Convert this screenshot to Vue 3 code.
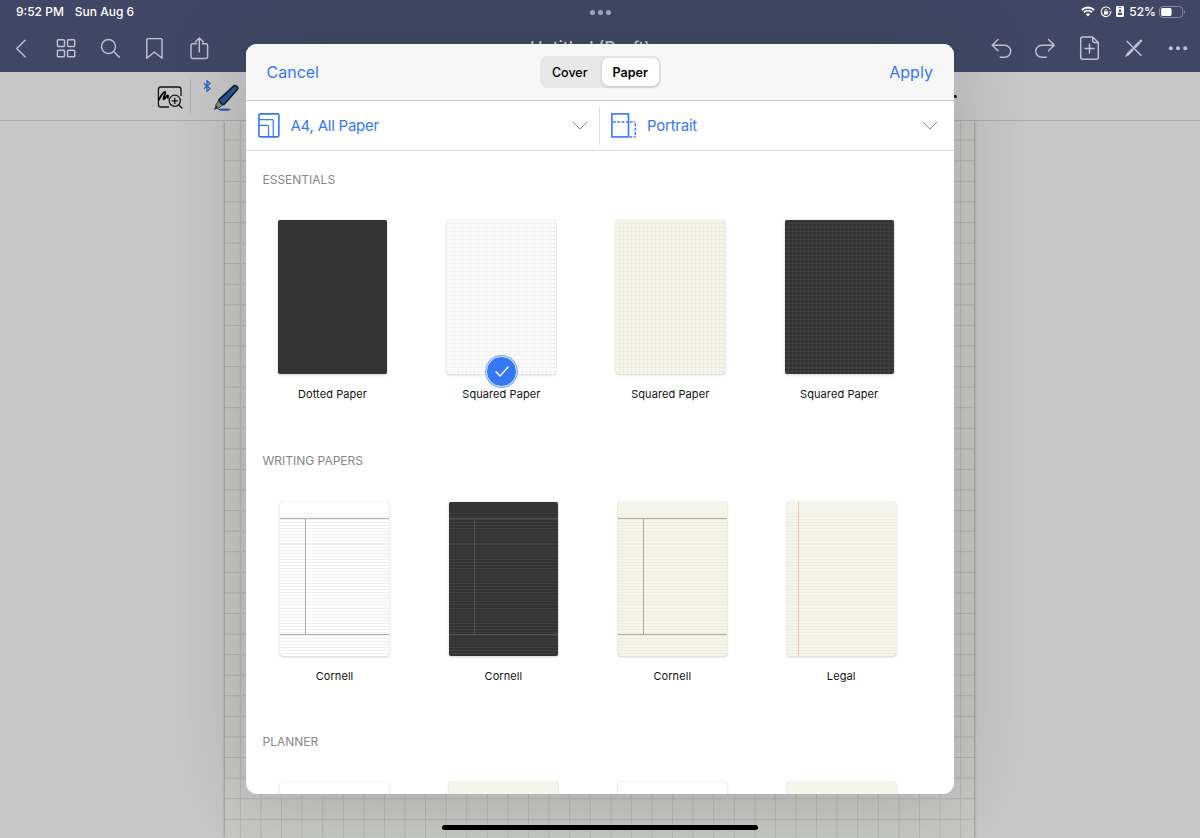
<template>
  <div class="screen">
    <div class="status-bar">
      <div class="status-left">
        <span>9:52 PM</span>
        <span>Sun Aug 6</span>
      </div>
      <div class="multitask"><i></i><i></i><i></i></div>
      <div class="status-right">
        <svg class="wifi" viewBox="0 0 14 11" width="14" height="11">
          <path d="M7 10.6 4.9 8.3a3.1 3.1 0 0 1 4.2 0z" fill="#fff" />
          <path d="M2.9 6.3a5.9 5.9 0 0 1 8.2 0M.9 4a8.8 8.8 0 0 1 12.2 0" fill="none" stroke="#fff" stroke-width="1.9" />
        </svg>
        <svg class="lock" viewBox="0 0 12 12" width="12" height="12">
          <path d="M10.3 3.6A4.8 4.8 0 1 0 10.6 7.2" fill="none" stroke="#fff" stroke-width="1.1" />
          <path d="M8.9 5.6h3l-1.5 2z" fill="#fff" />
          <rect x="3.9" y="5.3" width="4" height="3.1" rx=".5" fill="#fff" />
          <path d="M4.7 5.4V4.6a1.2 1.2 0 0 1 2.4 0v.8" fill="none" stroke="#fff" stroke-width=".7" />
        </svg>
        <svg class="badge" viewBox="0 0 8 11" width="8" height="11">
          <rect width="8" height="11" rx="1.2" fill="#fff" />
          <path d="M2.7 1.3h2.6" stroke="#3e4663" stroke-width=".9" />
          <circle cx="4" cy="4.7" r="1.3" fill="#3e4663" />
          <path d="M1.7 8.9c0-3.2 4.6-3.2 4.6 0z" fill="#3e4663" />
        </svg>
        <span class="percent">52%</span>
        <svg viewBox="0 0 27 12" width="27" height="12">
          <rect x=".5" y=".5" width="23.2" height="11" rx="3.4" fill="none" stroke="#868ca0" />
          <rect x="2" y="2" width="10.6" height="8" rx="1.8" fill="#fff" />
          <path d="M25 4.2c1.4.5 1.4 3.1 0 3.6z" fill="#868ca0" />
        </svg>
      </div>
    </div>

    <div class="nav-bar">
      <div class="nav-group">
        <svg v-for="icon in leftIcons" :key="icon.name" class="nav-icon" viewBox="0 0 26 26">
          <path :d="icon.d" />
        </svg>
      </div>
      <div class="doc-title">Untitled (Draft)</div>
      <div class="nav-group">
        <svg v-for="icon in rightIcons" :key="icon.name" class="nav-icon" viewBox="0 0 26 26">
          <path :d="icon.d" />
          <path v-if="icon.thick" :d="icon.thick" class="thick" />
          <template v-if="icon.name === 'more'">
            <circle cx="5.8" cy="13.2" r="2" />
            <circle cx="13" cy="13.2" r="2" />
            <circle cx="20.2" cy="13.2" r="2" />
          </template>
        </svg>
      </div>
    </div>

    <div class="tool-bar">
      <svg class="lasso" viewBox="0 0 26 24" width="26" height="24">
        <path d="M12 22H4a2.6 2.6 0 0 1-2.6-2.6V4.6A2.6 2.6 0 0 1 4 2h17.4A2.6 2.6 0 0 1 24 4.6V11" fill="none" stroke="#151515" stroke-width="1.3" />
        <path d="M2 14.600C4.300 10.200 6.600 6.300 8 6.900c1.500.7-2.700 6.800-1.300 7.400 1.300.5 2.900-4.500 4.100-3.900.8.400-.3 1.700.1 2.300" fill="none" stroke="#000" stroke-width="1.900" stroke-linecap="round" />
        <circle cx="17.8" cy="15.8" r="5.6" fill="#c3c4c3" stroke="#151515" stroke-width="1.3" />
        <path d="M17.8 13.2v5.2M15.2 15.8h5.2M21.9 20l3 3" stroke="#151515" stroke-width="1.3" stroke-linecap="round" />
      </svg>
      <span class="divider"></span>
      <svg class="bluetooth" viewBox="0 0 8 12" width="8" height="12">
        <path d="M.8 3.3 7 8.5 4 11.300V.7l3 2.800L.8 8.700" fill="none" stroke="#2c63c4" stroke-width="1.300" />
      </svg>
      <svg class="pen" viewBox="0 0 27 28" width="27" height="28">
        <ellipse cx="11.500" cy="25.600" rx="6.500" ry="1.200" fill="#285bb0" />
        <path d="m1 26 1.700-4.700 2.900 2.900z" fill="#333" />
        <path d="m2.700 21.300 3.600-5.400 4.500 4.100-5.200 4.200z" fill="#8c9288" stroke="#151a22" stroke-width=".8" />
        <path d="M6.300 15.400 20.800 1.900c1.700-1.500 5 1.300 3.700 3.300L11.300 20.300c-1.300 1.300-6.300-3.300-5-4.900z" fill="#22569a" stroke="#101820" stroke-width="1.500" />
      </svg>
      <span class="stroke-end"></span>
    </div>

    <div class="canvas">
      <div class="sheet"></div>
    </div>

    <div class="modal">
      <div class="modal-header">
        <button class="link">Cancel</button>
        <div class="segmented">
          <span class="segment">Cover</span>
          <span class="segment active">Paper</span>
        </div>
        <button class="link apply">Apply</button>
      </div>

      <div class="filters">
        <div class="filter size">
          <svg viewBox="0 0 22 25" width="22" height="25">
            <rect x=".9" y=".9" width="20" height="23" rx="1.3" fill="none" stroke="#3478f6" stroke-width="1.6" />
            <path d="M1 6.6h13.100a1.200 1.200 0 0 1 1.200 1.200V24M1 12.300h8.300a1.200 1.200 0 0 1 1.200 1.200V24" fill="none" stroke="#3478f6" stroke-width="1.200" />
          </svg>
          <span class="filter-label">A4, All Paper</span>
          <svg class="chevron" viewBox="0 0 16 9" width="16" height="9"><path d="m1 1 7 7 7-7" /></svg>
        </div>
        <div class="filter orientation">
          <svg viewBox="0 0 26 25" width="26" height="25">
            <rect x=".9" y=".9" width="16.600" height="23" fill="none" stroke="#3478f6" stroke-width="1.600" />
            <path d="M2 9h15M19 9h5.300M24.300 10.500V24M18.500 24h5.800" fill="none" stroke="#3478f6" stroke-width="1.500" stroke-dasharray="2.800 1.500" />
          </svg>
          <span class="filter-label">Portrait</span>
          <svg class="chevron" viewBox="0 0 16 9" width="16" height="9"><path d="m1 1 7 7 7-7" /></svg>
        </div>
      </div>

      <div class="paper-list">
        <section v-for="section in sections" :key="section.title" class="section" :class="section.kind">
          <h2>{{ section.title }}</h2>
          <div class="papers">
            <div v-for="(paper, i) in section.papers" :key="i" class="paper">
              <div class="thumb" :class="[paper.color, paper.type]">
                <template v-if="paper.type === 'cornell'">
                  <div class="cornell-top"></div>
                  <div class="cornell-body"></div>
                </template>
                <div v-if="paper.selected" class="check">
                  <svg viewBox="0 0 14 11" width="14" height="11">
                    <path d="m1 5.800 4.200 4.100L13 1" fill="none" stroke="#fff" stroke-width="1.400" stroke-linecap="round" stroke-linejoin="round" />
                  </svg>
                </div>
              </div>
              <div class="paper-name">{{ paper.name }}</div>
            </div>
          </div>
        </section>
      </div>
    </div>

    <div class="home-indicator"></div>
  </div>
</template>

<script setup>
const leftIcons = [
  { name: 'back', d: 'M16 5.300 7.800 13.500l8.200 8.200' },
  {
    name: 'grid',
    d: 'M5.200 4.800h5.500q.8 0 .8.800v5q0 .8-.8.800H5.200q-.8 0-.8-.8v-5q0-.8.8-.8zM15.400 4.800h5.500q.8 0 .8.800v5q0 .8-.8.800h-5.500q-.8 0-.8-.8v-5q0-.8.8-.8zM5.200 15.200h5.500q.8 0 .8.800v5q0 .8-.8.800H5.200q-.8 0-.8-.8v-5q0-.8.8-.8zM15.400 15.200h5.500q.8 0 .8.800v5q0 .8-.8.800h-5.500q-.8 0-.8-.8v-5q0-.8.8-.8z'
  },
  { name: 'search', d: 'M18.500 11.500a7 7 0 1 1-14 0 7 7 0 0 1 14 0zM16.600 16.600l5.700 5.700' },
  { name: 'bookmark', d: 'M6.800 3.600h13.200q1 0 1 1V23.300L13.400 17l-7.600 6.300V4.600q0-1 1-1z' },
  {
    name: 'share',
    d: 'M10.300 8.800H6.700q-1.700 0-1.700 1.700v11.300q0 1.700 1.700 1.700h13.200q1.700 0 1.700-1.700V10.500q0-1.700-1.700-1.700h-3.600M13.300 17V3M9.300 6.900l4-4 4 4'
  }
]

const rightIcons = [
  { name: 'undo', d: 'M10 4.600 4.200 10.200l5.800 5.500M4.400 10.200h12.300a5.600 5.600 0 0 1 0 12h-4.500' },
  { name: 'redo', d: 'M16.500 4.600l5.800 5.600-5.800 5.500M22.100 10.200H9.800a5.600 5.600 0 0 0 0 12h4.500' },
  {
    name: 'add-page',
    d: 'M6.700 1.900h10l5.600 5.600v14.700q0 2-2 2H6.700q-2 0-2-2V3.900q0-2 2-2zM16.700 2.200v3.600q0 1.700 1.700 1.700h3.600M13.500 8.900v9M9 13.400h9'
  },
  { name: 'no-pen', d: 'M6 6.300 20.100 20.400M5.100 20.900 17.300 8.600', thick: 'M6.800 19.200 11.100 14.900M14.500 11.400l3.400-3.400M19.700 6.100l.1-.1' },
  { name: 'more', d: '' }
]

const sections = [
  {
    title: 'ESSENTIALS',
    kind: 'essentials',
    papers: [
      { name: 'Dotted Paper', color: 'dark', type: 'dotted' },
      { name: 'Squared Paper', color: 'white', type: 'squared', selected: true },
      { name: 'Squared Paper', color: 'cream', type: 'squared' },
      { name: 'Squared Paper', color: 'dark', type: 'squared' }
    ]
  },
  {
    title: 'WRITING PAPERS',
    kind: 'writing',
    papers: [
      { name: 'Cornell', color: 'white', type: 'cornell' },
      { name: 'Cornell', color: 'dark', type: 'cornell' },
      { name: 'Cornell', color: 'cream', type: 'cornell' },
      { name: 'Legal', color: 'cream', type: 'legal' }
    ]
  },
  {
    title: 'PLANNER',
    kind: 'planner',
    papers: [
      { name: '', color: 'white', type: 'plain' },
      { name: '', color: 'cream', type: 'plain' },
      { name: '', color: 'white', type: 'plain' },
      { name: '', color: 'cream', type: 'plain' }
    ]
  }
]
</script>

<style>
body {
  overflow: hidden;
}
</style>

<style scoped>
.screen {
  position: relative;
  display: flex;
  flex-direction: column;
  width: 1200px;
  height: 838px;
  overflow: hidden;
  font-family: Inter, sans-serif;
  background: #c7c7c7;
}

.status-bar {
  display: grid;
  grid-template-columns: 1fr auto 1fr;
  align-items: center;
  box-sizing: border-box;
  height: 24px;
  padding: 0 14px 1px 16px;
  background: #3f4764;
  color: #fff;
  font-size: 12px;
  font-weight: 500;
}

.status-left {
  display: flex;
  gap: 11px;
}

.multitask {
  display: flex;
  gap: 3px;
  padding-top: 2px;
  margin-right: 2px;
}

.multitask i {
  width: 5px;
  height: 5px;
  border-radius: 50%;
  background: #a6accb;
}

.status-right {
  display: flex;
  align-items: center;
  justify-content: flex-end;
}

.lock {
  margin-left: 4.5px;
}

.badge {
  margin-left: 4.5px;
}

.percent {
  margin: 0 3px 0 5px;
}

.nav-bar {
  display: flex;
  justify-content: space-between;
  align-items: center;
  height: 48px;
  padding: 0 9px 0 8.5px;
  background: #3f4764;
}

.nav-group {
  display: flex;
  gap: 18.3px;
}

.nav-icon {
  width: 26px;
  height: 26px;
  fill: none;
  stroke: #bec2d2;
  stroke-width: 1.45;
  stroke-linecap: round;
  stroke-linejoin: round;
}

.nav-icon circle {
  fill: #bec2d2;
  stroke: none;
}

.nav-icon .thick {
  stroke-width: 2.8;
}

.doc-title {
  margin-right: 19px;
  color: #c8ccd6;
  font-size: 17px;
  font-weight: 500;
}

.tool-bar {
  display: flex;
  align-items: center;
  height: 49px;
  box-sizing: border-box;
  padding: 1px 0 0 157px;
  border-bottom: 1px solid #adaead;
  background: #c7c7c7;
}

.divider {
  width: 1px;
  height: 36px;
  margin-left: 7px;
  background: #b1b2b1;
}

.bluetooth {
  align-self: flex-start;
  margin: 7px 0 0 12px;
}

.pen {
  margin: 2px 0 0 2px;
}

.stroke-end {
  width: 17px;
  height: 3px;
  margin-left: 700px;
  border-radius: 2px;
  background: #222;
}

.canvas {
  display: flex;
  flex: 1;
  justify-content: center;
}

.sheet {
  width: 749px;
  margin-right: 1px;
  background-color: #c7c8c6;
  background-image:
    linear-gradient(to right, #b2b4b2 1px, transparent 1px),
    linear-gradient(to bottom, #b2b4b2 1px, transparent 1px);
  background-size: 20.58px 20.58px;
  background-position: 14.9px 18.7px;
  box-shadow: 0 0 3px rgba(0, 0, 0, 0.4);
  clip-path: inset(0 -8px);
}

.modal {
  position: absolute;
  top: 44px;
  left: 246px;
  display: flex;
  flex-direction: column;
  width: 708px;
  height: 750px;
  overflow: hidden;
  border-radius: 11px;
  background: #fff;
  box-shadow: 0 0 80px rgba(30, 42, 32, 0.2);
}

.modal-header {
  display: grid;
  grid-template-columns: 1fr auto 1fr;
  align-items: center;
  height: 57px;
  box-sizing: border-box;
  padding: 0 21px 0 20.5px;
  border-bottom: 1px solid #c9c9ca;
  background: #f7f7f7;
}

.link {
  justify-self: start;
  padding: 0;
  border: 0;
  background: none;
  color: #3478f6;
  font: 400 16px Inter, sans-serif;
}

.apply {
  justify-self: end;
  letter-spacing: 0.05px;
}

.segmented {
  display: flex;
  box-sizing: border-box;
  width: 121px;
  height: 32px;
  margin-left: 1px;
  padding: 2px;
  border-radius: 8px;
  background: #e8e8e9;
}

.segment {
  flex: 1;
  padding: 1px 4px 0 0;
  border-radius: 6.5px;
  color: #000;
  font-size: 12.5px;
  font-weight: 500;
  line-height: 27px;
  text-align: center;
}

.segment.active {
  flex: 0 0 57px;
  padding-right: 0;
  background: #fff;
  box-shadow: 0 1px 3px rgba(0, 0, 0, 0.2);
  font-weight: 600;
}

.filters {
  display: flex;
  align-items: center;
  height: 50px;
  box-sizing: border-box;
  border-bottom: 1px solid #dcdcdd;
}

.filter {
  display: flex;
  align-items: center;
  box-sizing: border-box;
  height: 38px;
}

.size {
  width: 354px;
  padding: 0 11px 0 11.5px;
  border-right: 1px solid #dcdcdd;
}

.orientation {
  flex: 1;
  padding: 0 16px 0 11px;
}

.filter-label {
  flex: 1;
  margin-left: 11px;
  color: #3478f6;
  font-size: 15px;
  letter-spacing: -0.23px;
}

.orientation .filter-label {
  margin-left: 10px;
}

.chevron {
  fill: none;
  stroke: #8a8a8e;
  stroke-width: 1;
}

.paper-list {
  flex: 1;
  overflow: hidden;
}

.section {
  height: 281.2px;
}

h2 {
  margin: 0;
  padding: 20px 0 0 16.5px;
  color: #87878b;
  font-size: 12px;
  font-weight: 400;
  line-height: 17px;
}

.papers {
  display: flex;
  gap: 59.9px;
  padding: 32px 0 0 32px;
}

.writing .papers,
.planner .papers {
  padding-left: 34px;
}

.writing .papers {
  padding-top: 32.4px;
}

.paper {
  width: 109px;
}

.thumb {
  position: relative;
  width: 109px;
  height: 154px;
  border-radius: 2px;
  box-shadow: 0 0 1px rgba(0, 0, 0, 0.25), 0 1px 3px rgba(0, 0, 0, 0.15);
}

.white {
  --line: #f1f1f2;
  --rule: #ababab;
  background-color: #fff;
}

.cream {
  --line: #edecdf;
  --rule: #aaa99c;
  background-color: #f6f5e9;
}

.dark {
  --line: #3f3f41;
  --rule: #515153;
  background-color: #333;
}

.squared {
  background-image:
    repeating-linear-gradient(to right, transparent 0 3px, var(--line) 3px 4px),
    repeating-linear-gradient(to bottom, transparent 0 3px, var(--line) 3px 4px);
}

.cornell,
.legal {
  background-image: repeating-linear-gradient(to bottom, var(--line) 0 1px, transparent 1px 3.05px);
  background-position: 0 11px;
  background-repeat: no-repeat;
}

.cornell-top {
  height: 16px;
}

.cornell-body {
  height: 115px;
  border-top: 1px solid var(--rule);
  border-bottom: 1px solid var(--rule);
  background: linear-gradient(var(--rule), var(--rule)) 25px 0 / 1px 100% no-repeat;
}

.legal {
  background-image:
    linear-gradient(#e9c3bb, #e9c3bb),
    repeating-linear-gradient(to bottom, var(--line) 0 1px, transparent 1px 3.05px);
  background-size: 1px 100%, 100% 100%;
  background-position: 11px 0, 0 11px;
}

.check {
  position: absolute;
  left: 39.5px;
  bottom: -13px;
  display: flex;
  align-items: center;
  justify-content: center;
  width: 29px;
  height: 29px;
  border: 1px solid #d6e5ff;
  border-radius: 50%;
  background: #3478f6;
  box-shadow: 0 0 0 1px #88b2fb;
}

.paper-name {
  margin-top: 12px;
  color: #111;
  font-size: 11px;
  line-height: 16px;
  letter-spacing: 0.08px;
  text-align: center;
}

.home-indicator {
  position: absolute;
  bottom: 8px;
  left: 442px;
  width: 316px;
  height: 5px;
  border-radius: 3px;
  background: #000;
}
</style>
